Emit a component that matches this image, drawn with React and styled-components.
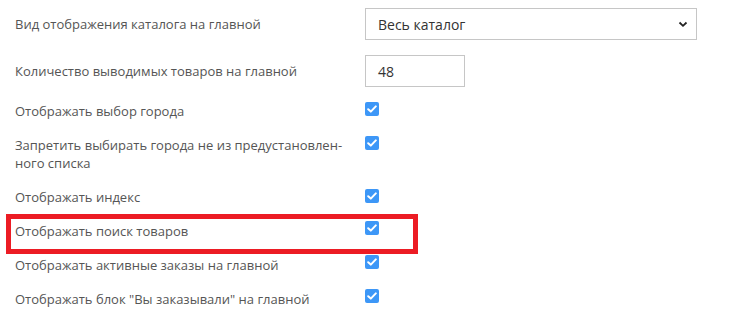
import React from 'react';
import styled, { createGlobalStyle } from 'styled-components';

const GlobalStyle = createGlobalStyle`
  html, body {
    margin: 0;
    padding: 0;
    background: #fff;
  }
  body {
    font-family: "Open Sans", "Liberation Sans", sans-serif;
  }
`;

const SettingsForm = styled.div`
  width: 740px;
  padding-top: 8px;
  display: flex;
  flex-direction: column;
`;

const FieldRow = styled.div`
  display: flex;
  align-items: center;
  margin-bottom: ${(p) => p.$gap}px;
`;

const CheckRow = styled.div`
  position: relative;
  display: flex;
  align-items: flex-start;
  padding: 8px 0;
`;

const Label = styled.div`
  width: 365px;
  flex-shrink: 0;
  padding-left: 15px;
  padding-right: 15px;
  box-sizing: border-box;
  font-size: 13px;
  line-height: 18px;
  color: #555;
`;

const LabelLine = styled.div`
  white-space: nowrap;
`;

const SelectBox = styled.div`
  width: 332px;
  height: 32px;
  box-sizing: border-box;
  border: 1px solid #c6c6c6;
  display: flex;
  align-items: center;
  justify-content: space-between;
  padding: 0 8px 0 12px;
  font-size: 14px;
  color: #333;
`;

const TextInput = styled.div`
  width: 100px;
  height: 32px;
  box-sizing: border-box;
  border: 1px solid #c6c6c6;
  display: flex;
  align-items: center;
  padding-left: 12px;
  font-size: 14px;
  color: #333;
`;

const CheckBox = styled.span`
  width: 14px;
  height: 14px;
  border-radius: 2px;
  background: #3d97f7;
  display: flex;
  align-items: center;
  justify-content: center;
  margin-top: ${(p) => p.$offset || 0}px;
`;

const Highlight = styled.div`
  position: absolute;
  left: 6px;
  top: 0;
  width: 412px;
  height: 40px;
  box-sizing: border-box;
  border: 5px solid #ec1c24;
  pointer-events: none;
`;

function Check({ offset }) {
  return (
    <CheckBox $offset={offset}>
      <svg width="10" height="8" viewBox="0 0 10 8">
        <path d="M1.2 4.2 L3.8 6.6 L8.8 1.4" fill="none" stroke="#fff" strokeWidth="2" strokeLinecap="round" strokeLinejoin="round" />
      </svg>
    </CheckBox>
  );
}

const checks = [
  { label: 'Отображать выбор города' },
  { label: 'Запретить выбирать города не из предустановлен-\nного списка' },
  { label: 'Отображать индекс', offset: 1 },
  { label: 'Отображать поиск товаров', highlight: true, offset: -1 },
  { label: 'Отображать активные заказы на главной', offset: -1 },
  { label: 'Отображать блок "Вы заказывали" на главной', offset: -1 },
];

export default function App() {
  return (
    <>
      <GlobalStyle />
      <SettingsForm>
        <FieldRow $gap={15}>
          <Label>Вид отображения каталога на главной</Label>
          <SelectBox>
            <span>Весь каталог</span>
            <svg width="10" height="8" viewBox="0 0 10 8">
              <path d="M1.5 2.5 L5 5.8 L8.5 2.5" fill="none" stroke="#222" strokeWidth="1.8" />
            </svg>
          </SelectBox>
        </FieldRow>
        <FieldRow $gap={7}>
          <Label>Количество выводимых товаров на главной</Label>
          <TextInput>48</TextInput>
        </FieldRow>
        {checks.map((c) => (
          <CheckRow key={c.label}>
            {c.highlight && <Highlight />}
            <Label>
              {c.label.split('\n').map((line, i) => (
                <LabelLine key={i}>{line}</LabelLine>
              ))}
            </Label>
            <Check offset={c.offset} />
          </CheckRow>
        ))}
      </SettingsForm>
    </>
  );
}
